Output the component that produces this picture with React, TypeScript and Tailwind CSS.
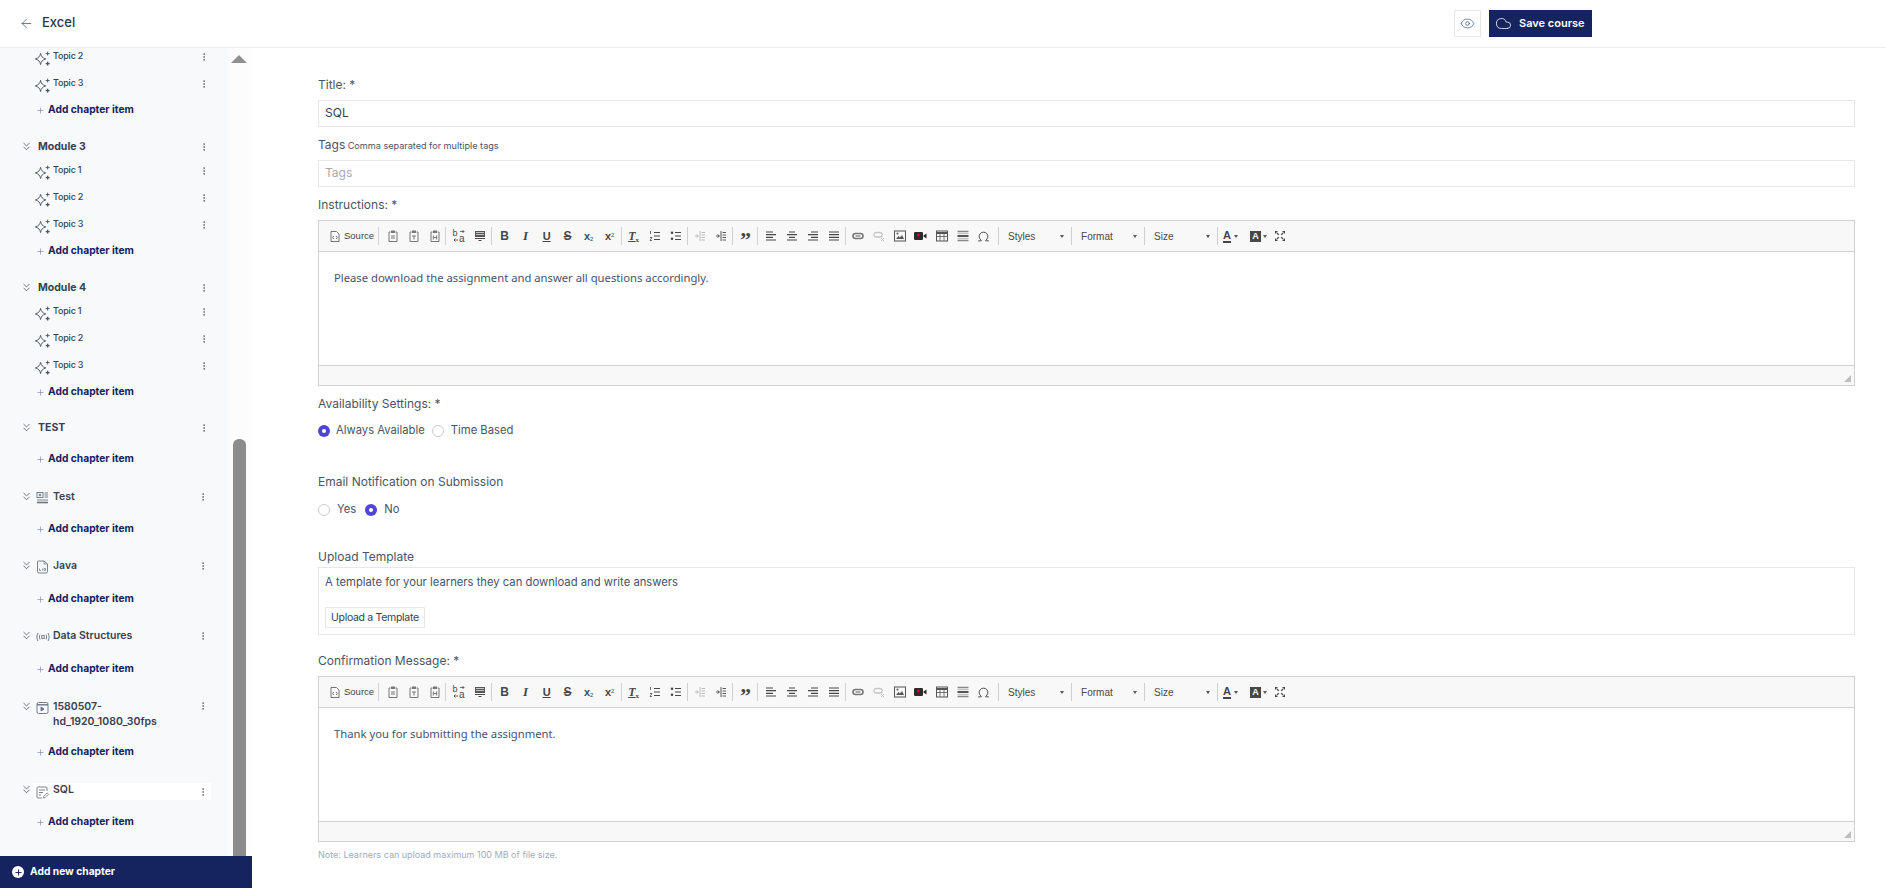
import { ArrowLeft, ChevronsDown, Cloud, EllipsisVertical, Eye, Plus, Omega } from 'lucide-react';
import type { ReactNode } from 'react';

const Sparkle = () => (
  <svg width="15" height="15" viewBox="0 0 14 14" fill="none" stroke="#4b5563" strokeWidth="0.9" className="shrink-0">
    <path d="M5.2 2.2 C5.7 5 7 6.4 10 7.4 C7 8.4 5.7 9.8 5.2 12.6 C4.7 9.8 3.4 8.4 .4 7.4 C3.4 6.4 4.7 5 5.2 2.2Z" />
    <path d="M11.8 .6v3.6M10 2.4h3.6" />
    <path d="M11.8 10v3.6M10 11.8h3.6" strokeWidth="1.3" />
  </svg>
);

const QuizIcon = () => (
  <svg width="13" height="13" viewBox="0 0 13 13" fill="none" stroke="#6b7280" strokeWidth="0.9">
    <rect x="1" y="1.5" width="6" height="5" />
    <path d="M3.3 3.2h1.4v1.6H3.3z" />
    <path d="M8.5 2h3.5M8.5 4h3.5M8.5 6h3.5M1 9h11" />
    <path d="M1 11.5h11" strokeWidth="1.6" />
  </svg>
);

const FileIcon = () => (
  <svg width="13" height="14" viewBox="0 0 13 14" fill="none" stroke="#6b7280" strokeWidth="0.9">
    <path d="M2.5 1h5.5l3.5 3v7.5a1.5 1.5 0 0 1-1.5 1.5H3a1.5 1.5 0 0 1-1.5-1.5V2A1 1 0 0 1 2.5 1z" />
    <path d="M8 1v3h3.5M3.5 8.5v2h1.5M6.5 8.5v2M8 8.5h1.5v2H8z" strokeWidth="0.7" />
  </svg>
);

const AudioIcon = () => (
  <svg width="14" height="12" viewBox="0 0 14 12" fill="none" stroke="#6b7280" strokeWidth="0.9">
    <path d="M2 2C.5 4.5.5 7.5 2 10M12 2c1.5 2.5 1.5 5.5 0 8" />
    <path d="M4 3.5C3.2 5 3.2 7 4 8.5M10 3.5c.8 1.5.8 3.5 0 5" />
    <rect x="5.8" y="4.6" width="2.4" height="2.8" />
  </svg>
);

const VideoIcon = () => (
  <svg width="13" height="13" viewBox="0 0 13 13" fill="none" stroke="#6b7280" strokeWidth="0.9">
    <rect x="1" y="1.5" width="11" height="11" rx="1.5" />
    <path d="M1 3.8h11" strokeWidth="1.4" />
    <path d="M5 6v4l3-2z" fill="#6b7280" />
  </svg>
);

const AssignmentIcon = () => (
  <svg width="13" height="13" viewBox="0 0 13 13" fill="none" stroke="#6b7280" strokeWidth="0.9">
    <path d="M11 5V2a1 1 0 0 0-1-1H2a1 1 0 0 0-1 1v9a1 1 0 0 0 1 1h4" />
    <path d="M3 4h6M3 6.5h4M3 9h2" />
    <path d="M7.5 12l.4-1.8 3.3-3.3 1.3 1.3-3.3 3.4z" strokeWidth="0.8" />
  </svg>
);

const Dots = ({ className = '' }: { className?: string }) => (
  <EllipsisVertical size={10} strokeWidth={1.7} className={`text-[#4b5563] shrink-0 ${className}`} />
);

const Topic = ({ label }: { label: string }) => (
  <div className="flex h-[27px] items-center pl-[35px] pr-[20px]">
    <span className="mt-[3px]"><Sparkle /></span>
    <span className="ml-[3px] flex-1 -mt-[2px] text-[9px] font-medium tracking-[-0.2px] text-[#374151]">{label}</span>
    <Dots />
  </div>
);

const AddItem = ({ className = '' }: { className?: string }) => (
  <div className={`flex h-[26px] items-center pl-[36px] font-bold text-[#15235f] ${className}`}>
    <Plus size={9} strokeWidth={1.4} className="text-[#5f6f9f] mr-[3px]" />
    <span className="text-[10.25px]">Add chapter item</span>
  </div>
);

const ChapterHead = ({ icon, children, active, wrap }: { icon?: ReactNode; children: ReactNode; active?: boolean; wrap?: boolean }) => (
  <div className={`flex min-h-[23px] pl-[20px] ${wrap ? 'items-start' : 'items-center'} ${icon ? 'pr-[18px]' : 'pr-[20px] pt-[2px]'}`}>
    <ChevronsDown size={13} strokeWidth={1.3} className={`text-[#374151] shrink-0 ${wrap ? 'mt-[2px]' : ''}`} />
    {icon ? (
      <div className={`flex flex-1 py-[1px] pl-[3px] pr-[3px] ${wrap ? 'items-start' : 'items-center'} ${active ? 'mt-[4px] bg-white' : ''}`}>
        <span className="w-[17px] shrink-0 mt-[2px]">{icon}</span>
        <span className={`flex-1 text-[10.5px] font-semibold leading-[15px] text-[#374151] ${active ? '-mt-[4px]' : ''}`}>{children}</span>
        <Dots className={wrap ? 'mt-[2px]' : ''} />
      </div>
    ) : (
      <>
        <span className="ml-[5px] flex-1 text-[10.5px] font-bold text-[#374151]">{children}</span>
        <Dots />
      </>
    )}
  </div>
);

const Sidebar = () => (
  <div className="flex h-full w-[252px] shrink-0 flex-col">
    <div className="flex min-h-0 flex-1">
      <div className="-mt-[5px] w-[229px] shrink-0 bg-[#f7f9fb]">
        <Topic label="Topic 2" />
        <Topic label="Topic 3" />
        <AddItem className="mb-[11px]" />

        <ChapterHead>Module 3</ChapterHead>
        <Topic label="Topic 1" />
        <Topic label="Topic 2" />
        <Topic label="Topic 3" />
        <AddItem className="mb-[11px]" />

        <ChapterHead>Module 4</ChapterHead>
        <Topic label="Topic 1" />
        <Topic label="Topic 2" />
        <Topic label="Topic 3" />
        <AddItem className="mb-[10px]" />

        <ChapterHead>TEST</ChapterHead>
        <AddItem className="mt-[8px] mb-[13px]" />

        <ChapterHead icon={<QuizIcon />}>Test</ChapterHead>
        <AddItem className="mt-[8px] mb-[12px]" />

        <ChapterHead icon={<FileIcon />}>Java</ChapterHead>
        <AddItem className="mt-[9px] mb-[12px]" />

        <ChapterHead icon={<AudioIcon />}>Data Structures</ChapterHead>
        <AddItem className="mt-[9px] mb-[16px]" />

        <ChapterHead icon={<VideoIcon />} wrap>
          1580507-
          <br />
          hd_1920_1080_30fps
        </ChapterHead>
        <AddItem className="mt-[9px] mb-[13px]" />

        <ChapterHead icon={<AssignmentIcon />} active>
          SQL
        </ChapterHead>
        <AddItem className="mt-[8px]" />
      </div>
      <div className="flex w-[23px] flex-col items-center bg-[#fcfcfc] pt-[7px] pr-[3px]">
        <div className="h-0 w-0 border-x-[8px] border-b-[8px] border-x-transparent border-b-[#8f8f8f]" />
        <div className="mt-auto h-[417px] w-[13px] rounded-t-[6px] bg-[#8c8c8c]" />
      </div>
    </div>
    <div className="flex h-[32px] items-center bg-[#15235f] pl-[12px] text-white">
      <span className="flex h-[12px] w-[12px] items-center justify-center rounded-full bg-white">
        <Plus size={9} strokeWidth={2.5} className="text-[#15235f]" />
      </span>
      <span className="ml-[6px] text-[10.25px] font-bold">Add new chapter</span>
    </div>
  </div>
);

const Ico = ({ children }: { children: ReactNode }) => (
  <svg width="12" height="12" viewBox="0 0 12 12" fill="none" stroke="#474747" strokeWidth="1">
    {children}
  </svg>
);

const Btn = ({ children }: { children: ReactNode }) => (
  <span className="flex h-[16px] w-[21px] shrink-0 items-center justify-center text-[#474747]">{children}</span>
);

const Sep = () => <span className="h-[18px] w-px shrink-0 bg-[#cfcfcf]" />;

const Clip = ({ mark }: { mark: ReactNode }) => (
  <Ico>
    <path d="M3.5 2H2v9.5h8V2H8.5" stroke="#777" />
    <rect x="4" y=".5" width="4" height="2.5" fill="#777" stroke="none" />
    {mark}
  </Ico>
);

const Lines = ({ d }: { d: string }) => (
  <Ico>
    <path d={d} strokeWidth="1.2" />
  </Ico>
);

const Combo = ({ label }: { label: string }) => (
  <span className="flex h-[18px] w-[72px] shrink-0 items-center justify-between pl-[9px] pr-[7px] text-[10px] text-[#484848]">
    {label}
    <span className="h-0 w-0 border-x-[2.5px] border-t-[3px] border-x-transparent border-t-[#555]" />
  </span>
);

const Toolbar = () => (
  <div className="flex h-[31px] items-center border-b border-[#d1d1d1] bg-[#f8f8f8] pl-[11px] font-['Liberation_Sans',sans-serif]">
    <svg width="10" height="11" viewBox="0 0 10 11" fill="none" stroke="#555" strokeWidth="0.8" className="shrink-0">
      <path d="M1 .5h5.5L9 3v7.5H1z" />
      <path d="M3.8 5L2.6 6.5 3.8 8M6.2 5l1.2 1.5L6.2 8" />
    </svg>
    <span className="ml-[4px] mr-[4px] text-[9.5px] text-[#474747]">Source</span>
    <Sep />
    <span className="ml-[3px]" />
    <Btn><Clip mark={<path d="M4 6h4M4 8h4" stroke="#777" />} /></Btn>
    <Btn><Clip mark={<path d="M4 6h4M6 6v3.5" stroke="#777" />} /></Btn>
    <Btn><Clip mark={<path d="M4.3 5.5v4M7.7 5.5v4M4.3 7.5h3.4" stroke="#777" />} /></Btn>
    <Sep />
    <span className="ml-[2px]" />
    <Btn>
      <span className="relative flex h-[14px] w-[12px] text-[9px] leading-[9px]">
        <span>b</span>
        <span className="absolute bottom-0 right-0 text-[10px]">a</span>
        <svg width="12" height="14" viewBox="0 0 12 14" fill="none" stroke="#474747" strokeWidth="0.8" className="absolute left-0 top-0">
          <path d="M7 2.5h4M9.5 1 11 2.5 9.5 4M5 11H1M2.5 9.5 1 11l1.5 1.5" />
        </svg>
      </span>
    </Btn>
    <Btn>
      <Ico>
        <path d="M1 1h10v6H1z" fill="#555" stroke="none" />
        <path d="M2 2.5h8M2 4.5h8" stroke="#f8f8f8" strokeWidth="0.7" />
        <path d="M1 8.5h10M4.5 10.5h3" />
      </Ico>
    </Btn>
    <span className="ml-[1px]" />
    <Sep />
    <span className="ml-[2px]" />
    <Btn><b className="font-['Liberation_Sans',sans-serif] text-[12px]">B</b></Btn>
    <Btn><i className="font-['Liberation_Serif',serif] text-[13px] font-bold">I</i></Btn>
    <Btn><b className="text-[11px] underline">U</b></Btn>
    <Btn><b className="text-[12px] line-through">S</b></Btn>
    <Btn><b className="text-[11px]">x<sub className="text-[6px] font-normal">2</sub></b></Btn>
    <Btn><b className="text-[11px]">x<sup className="text-[6px] font-normal">2</sup></b></Btn>
    <span className="ml-[1px]" />
    <Sep />
    <span className="ml-[1px]" />
    <Btn><i className="font-['Liberation_Serif',serif] text-[12px] font-bold underline">T<sub className="not-italic text-[7px]">x</sub></i></Btn>
    <Btn><Ico><path d="M5 2.5h6M5 6h6M5 9.5h6" /><path d="M1.5 1v3M1 7.5h2l-2 3h2" strokeWidth="0.8" /></Ico></Btn>
    <Btn><Ico><path d="M5 2.5h6M5 6h6M5 9.5h6" /><circle cx="2" cy="2.8" r="1.3" fill="#474747" stroke="none" /><circle cx="2" cy="8.8" r="1.3" fill="#474747" stroke="none" /></Ico></Btn>
    <span className="ml-[1px]" />
    <Sep />
    <span className="ml-[1px]" />
    <Btn><Ico><g stroke="#bdbdbd"><path d="M6 1v10M7.5 2.5H11M7.5 5H11M7.5 7.5H11M7.5 10H11M1 6h3M2.5 4.5 4.5 6 2.5 7.5" /></g></Ico></Btn>
    <Btn><Ico><path d="M6 1v10M7.5 2.5H11M7.5 5H11M7.5 7.5H11M7.5 10H11M1 6h3M2.5 4.5 4.5 6 2.5 7.5" strokeWidth="0.9" /></Ico></Btn>
    <span className="ml-[1px]" />
    <Sep />
    <span className="ml-[2px]" />
    <Btn><b className="mt-[8px] font-['Liberation_Serif',serif] text-[22px] leading-[10px]">”</b></Btn>
    <span className="ml-[1px]" />
    <Sep />
    <span className="ml-[2px]" />
    <Btn><Lines d="M1 2h7M1 4.7h10M1 7.3h7M1 10h10" /></Btn>
    <Btn><Lines d="M3 2h6M1 4.7h10M3 7.3h6M1 10h10" /></Btn>
    <Btn><Lines d="M4 2h7M1 4.7h10M4 7.3h7M1 10h10" /></Btn>
    <Btn><Lines d="M1 2h10M1 4.7h10M1 7.3h10M1 10h10" /></Btn>
    <span className="ml-[1px]" />
    <Sep />
    <span className="ml-[1px]" />
    <Btn><Ico><rect x="1" y="3.5" width="10" height="5" rx="2.5" stroke="#777" strokeWidth="1.6" /><path d="M3.5 6h5" stroke="#777" strokeWidth="1.2" /></Ico></Btn>
    <Btn><Ico><rect x="1" y="2.5" width="8" height="4.5" rx="2" stroke="#c4c4c4" strokeWidth="1.3" /><path d="M8 8l3 3M11 8l-3 3" stroke="#c4c4c4" /></Ico></Btn>
    <Btn><Ico><rect x=".5" y="1" width="11" height="10" stroke="#555" /><path d="M2 9l2.5-3 1.5 1.5L8 5l2 4z" fill="#555" stroke="none" /><circle cx="3.5" cy="3.5" r="1" fill="#555" stroke="none" /></Ico></Btn>
    <Btn>
      <svg width="13" height="12" viewBox="0 0 13 12">
        <rect x="0" y="2" width="9" height="8" rx="1.2" fill="#2b2b2b" />
        <path d="M9.5 5.5l3-2v5l-3-2z" fill="#2b2b2b" />
        <circle cx="4.4" cy="5" r="1.4" fill="#e0061f" />
      </svg>
    </Btn>
    <Btn><Ico><rect x=".5" y="1" width="11" height="10" stroke="#555" /><path d="M.5 3h11" strokeWidth="2" stroke="#555" /><path d="M.5 6.5h11M4 3v8M8 3v8" stroke="#555" strokeWidth="0.8" /></Ico></Btn>
    <Btn><Ico><path d="M.5 1.5h11M.5 10.5h11" stroke="#888" strokeWidth="1.5" /><path d="M.5 6h11" stroke="#555" strokeWidth="2" /><path d="M.5 3.6h11M.5 8.4h11" stroke="#bbb" /></Ico></Btn>
    <Btn><Omega size={13} strokeWidth={1.8} /></Btn>
    <span className="ml-[4px]" />
    <Sep />
    <Combo label="Styles" />
    <Sep />
    <Combo label="Format" />
    <Sep />
    <Combo label="Size" />
    <Sep />
    <span className="ml-[5px] flex w-[24px] shrink-0 items-center text-[#474747]">
      <b className="border-b-2 border-[#474747] text-[11px] leading-[12px]">A</b>
      <span className="ml-[3px] h-0 w-0 border-x-[2.5px] border-t-[3px] border-x-transparent border-t-[#555]" />
    </span>
    <span className="ml-[3px] flex w-[19px] shrink-0 items-center">
      <b className="flex h-[11px] w-[11px] items-center justify-center bg-[#474747] text-[9px] leading-none text-white">A</b>
      <span className="ml-[2px] h-0 w-0 border-x-[2.5px] border-t-[3px] border-x-transparent border-t-[#555]" />
    </span>
    <Btn>
      <Ico>
        <path d="M1 1h3L1 4zM11 1H8l3 3zM1 11h3l-3-3zM11 11H8l3-3z" fill="#474747" stroke="none" />
        <path d="M3 3l1.8 1.8M9 3 7.2 4.8M3 9l1.8-1.8M9 9 7.2 7.2" strokeWidth="1.2" />
      </Ico>
    </Btn>
  </div>
);

const Editor = ({ text, h }: { text: string; h: string }) => (
  <div className="mt-[7px] border border-[#d1d1d1]">
    <Toolbar />
    <div className={`${h} px-[15px] pt-[17px] font-['Noto_Sans',sans-serif] text-[11.25px] leading-[18px] text-[#44546f]`}>{text}</div>
    <div className="flex h-[20px] items-end justify-end border-t border-[#d1d1d1] bg-[#f8f8f8] pb-[3px] pr-[3px]">
      <span className="h-0 w-0 border-b-[7px] border-l-[7px] border-b-[#bdbdbd] border-l-transparent" />
    </div>
  </div>
);

const Radio = ({ on }: { on?: boolean }) =>
  on ? (
    <span className="flex h-[12px] w-[12px] shrink-0 items-center justify-center rounded-full bg-[#4f46d8]">
      <span className="h-[4px] w-[4px] rounded-full bg-white" />
    </span>
  ) : (
    <span className="block h-[12px] w-[12px] shrink-0 rounded-full border border-[#c9ccd1] bg-white" />
  );

const Label = ({ children, className = '' }: { children: ReactNode; className?: string }) => (
  <div className={`h-[16px] text-[12px] leading-[16px] text-[#4b5563] ${className}`}>{children}</div>
);

const TextBox = ({ value, placeholder }: { value?: string; placeholder?: string }) => (
  <div className="flex h-[27px] items-center border border-[#e5e7eb] px-[6px] text-[12px]">
    {value ? <span className="-mt-[2px] text-[#374151]">{value}</span> : <span className="-mt-[2px] text-[#a3abb8]">{placeholder}</span>}
  </div>
);

export default function App() {
  return (
    <div className="flex h-screen flex-col overflow-hidden bg-white font-['Inter',sans-serif]">
      <header className="relative z-10 flex h-[48px] shrink-0 items-center border-b border-[#eeeff1] bg-white pl-[19px]">
        <ArrowLeft size={15} strokeWidth={1.2} className="text-[#3d4c80]" />
        <span className="ml-[8px] -mt-[2px] text-[13px] font-medium text-[#2f3640]">Excel</span>
        <div className="ml-auto mr-[294px] flex items-center">
          <button className="flex h-[27px] w-[27px] items-center justify-center border border-[#e5e7eb]">
            <Eye size={15} strokeWidth={1.2} className="text-[#4a5a8f]" />
          </button>
          <button className="ml-[8px] flex h-[27px] w-[103px] items-center bg-[#15235f] pl-[6px] text-white">
            <Cloud size={17} strokeWidth={1.1} />
            <span className="ml-[7px] -mt-[1px] text-[11px] font-semibold">Save course</span>
          </button>
        </div>
      </header>

      <div className="flex min-h-0 flex-1">
        <Sidebar />
        <main className="flex-1 pl-[66px] pr-[31px] pt-[29px]">
          <Label>Title: *</Label>
          <div className="mt-[7px]"><TextBox value="SQL" /></div>

          <Label className="mt-[10px]">
            Tags <span className="-ml-[1px] text-[9.1px] text-[#4b5563]">Comma separated for multiple tags</span>
          </Label>
          <div className="mt-[7px]"><TextBox placeholder="Tags" /></div>

          <Label className="mt-[10px]">Instructions: *</Label>
          <Editor h="h-[113px]" text="Please download the assignment and answer all questions accordingly." />

          <Label className="mt-[10px]">Availability Settings: *</Label>
          <div className="mt-[11px] flex h-[16px] items-center text-[11.25px] text-[#4b5563]">
            <Radio on />
            <span className="ml-[6px] -mt-[1px]">Always Available</span>
            <span className="ml-[7px]"><Radio /></span>
            <span className="ml-[7px] -mt-[1px]">Time Based</span>
          </div>

          <Label className="mt-[35px]">Email Notification on Submission</Label>
          <div className="mt-[12px] flex h-[16px] items-center text-[11.25px] text-[#4b5563]">
            <Radio />
            <span className="ml-[7px] -mt-[1px]">Yes</span>
            <span className="ml-[9px]"><Radio on /></span>
            <span className="ml-[7px] -mt-[1px]">No</span>
          </div>

          <Label className="mt-[31px]">Upload Template</Label>
          <div className="mt-[2px] h-[68px] border border-[#e5e7eb] px-[6px] pt-[6px] text-[11.25px] text-[#44546f]">
            <div className="leading-[16px]">A template for your learners they can download and write answers</div>
            <button className="mt-[17px] h-[21px] border border-[#e5e7eb] px-[5px] text-[10.5px] tracking-[-0.3px] text-[#374151]">Upload a Template</button>
          </div>

          <Label className="mt-[18px]">Confirmation Message: *</Label>
          <div className="mt-[1px]">
            <Editor h="h-[113px]" text="Thank you for submitting the assignment." />
          </div>
          <div className="mt-[7px] text-[9px] leading-[12px] text-[#a3abb8]">Note: Learners can upload maximum 100 MB of file size.</div>
        </main>
      </div>
    </div>
  );
}
